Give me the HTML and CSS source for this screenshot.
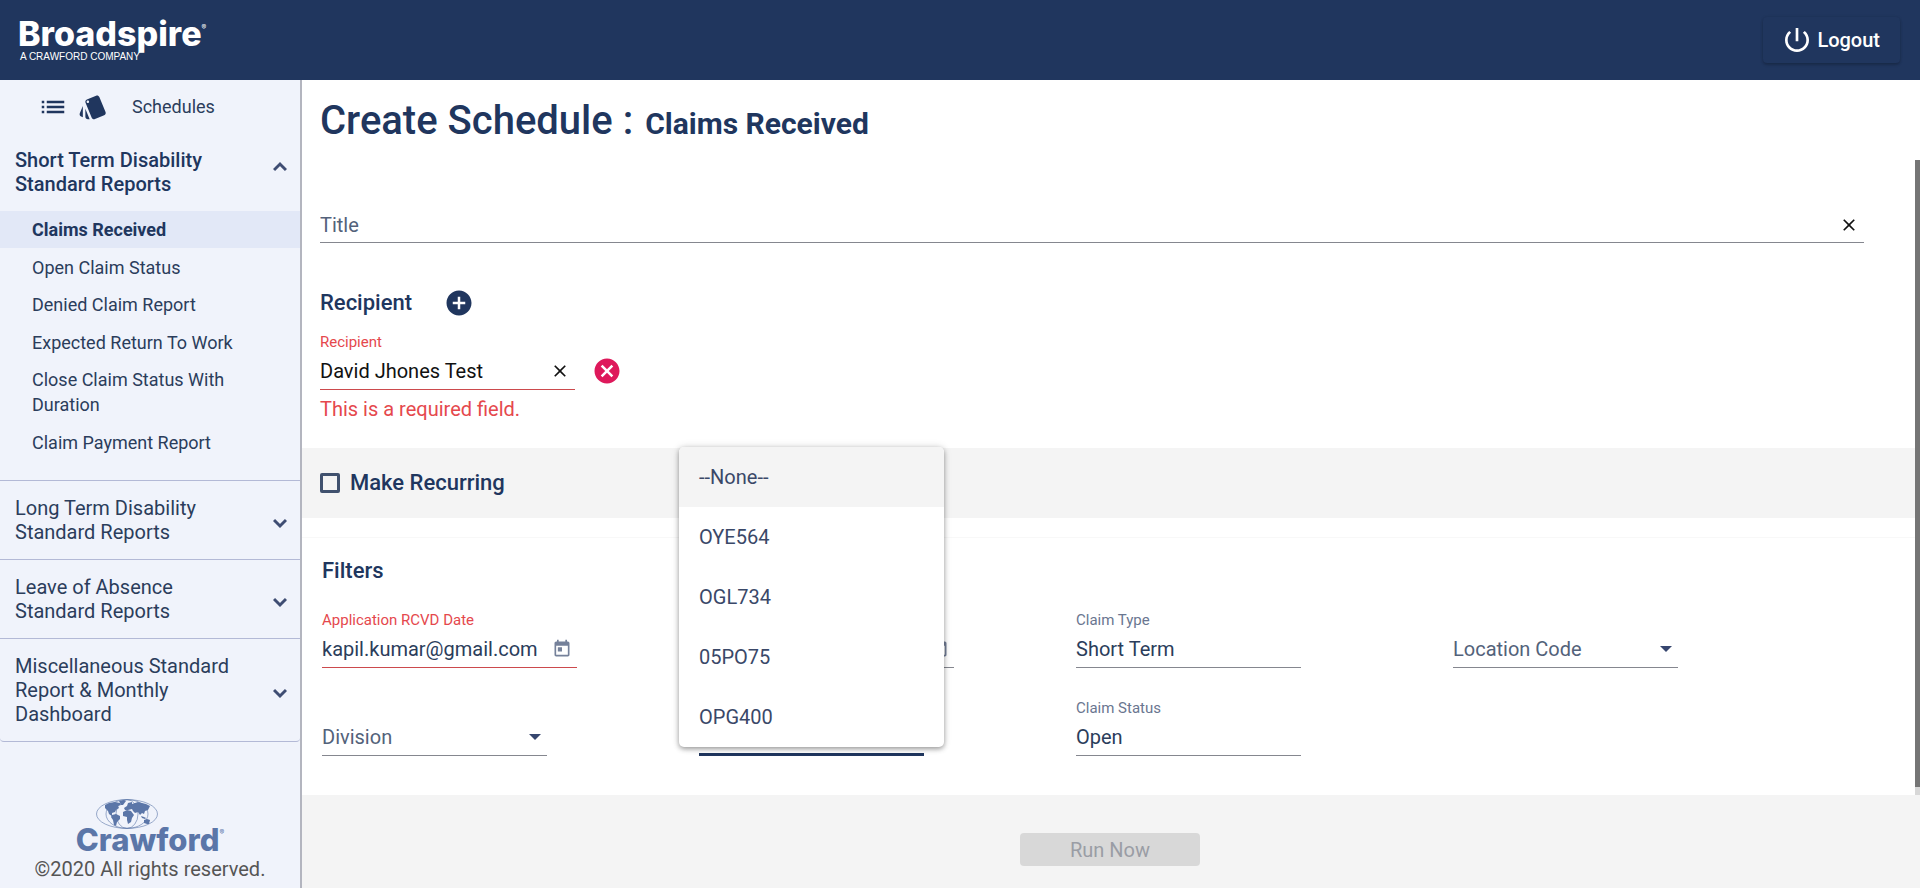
FILE: index.html
```html
<!DOCTYPE html>
<html lang="en">
<head>
<meta charset="utf-8">
<meta name="viewport" content="width=device-width, initial-scale=1">
<title>Create Schedule - Claims Received</title>
<link rel="stylesheet" href="styles.css">
</head>
<body>
<header class="topbar">
  <div class="brand">
    <div class="brand-name">Broadspire<sup class="reg">®</sup></div>
    <div class="brand-sub">A CRAWFORD COMPANY</div>
  </div>
  <button class="logout" type="button">
    <svg class="icon-32" viewBox="0 0 24 24" aria-hidden="true"><path d="M13 3h-2v10h2V3zm4.83 2.17l-1.42 1.42C17.99 7.86 19 9.81 19 12c0 3.87-3.13 7-7 7s-7-3.13-7-7c0-2.19 1.01-4.14 2.58-5.42L6.17 5.17C4.23 6.82 3 9.26 3 12c0 4.97 4.03 9 9 9s9-4.03 9-9c0-2.74-1.23-5.18-3.17-6.83z"/></svg>
    <span>Logout</span>
  </button>
</header>

<div class="shell">
  <aside class="sidebar">
    <div class="side-top">
      <svg class="icon-30" viewBox="0 0 24 24" aria-hidden="true"><path d="M3 13h2v-2H3v2zm0 4h2v-2H3v2zm0-8h2V7H3v2zm4 4h14v-2H7v2zm0 4h14v-2H7v2zM7 7v2h14V7H7z"/></svg>
      <svg class="icon-30" viewBox="0 0 24 24" aria-hidden="true"><path d="M2.53 19.65l1.34.56v-9.03l-2.43 5.86c-.41 1.02.08 2.19 1.09 2.61zm19.5-3.7L17.07 3.98c-.31-.75-1.04-1.21-1.81-1.23-.26 0-.53.04-.79.15L7.1 5.95c-.75.31-1.21 1.03-1.23 1.8-.01.27.04.54.15.8l4.96 11.97c.31.76 1.05 1.22 1.83 1.23.26 0 .52-.05.77-.15l7.36-3.05c1.02-.42 1.51-1.59 1.09-2.6zM7.88 8.75c-.55 0-1-.45-1-1s.45-1 1-1 1 .45 1 1-.45 1-1 1zm-2 11c0 1.1.9 2 2 2h1.45l-3.45-8.34v6.34z"/></svg>
      <span class="side-title">Schedules</span>
    </div>

    <nav class="groups" aria-label="Reports">
      <section class="group">
        <button class="group-head open" type="button" aria-expanded="true">
          <span>Short Term Disability Standard Reports</span>
          <svg class="chevron" viewBox="0 0 14 14" aria-hidden="true"><path d="M1 10l6-6 6 6"/></svg>
        </button>
        <ul class="links">
          <li><a class="link active" href="#">Claims Received</a></li>
          <li><a class="link" href="#">Open Claim Status</a></li>
          <li><a class="link" href="#">Denied Claim Report</a></li>
          <li><a class="link" href="#">Expected Return To Work</a></li>
          <li><a class="link" href="#">Close Claim Status With Duration</a></li>
          <li><a class="link" href="#">Claim Payment Report</a></li>
        </ul>
      </section>
      <section class="group">
        <button class="group-head" type="button" aria-expanded="false">
          <span>Long Term Disability Standard Reports</span>
          <svg class="chevron" viewBox="0 0 14 14" aria-hidden="true"><path d="M1 4l6 6 6-6"/></svg>
        </button>
      </section>
      <section class="group">
        <button class="group-head" type="button" aria-expanded="false">
          <span>Leave of Absence Standard Reports</span>
          <svg class="chevron" viewBox="0 0 14 14" aria-hidden="true"><path d="M1 4l6 6 6-6"/></svg>
        </button>
      </section>
      <section class="group">
        <button class="group-head" type="button" aria-expanded="false">
          <span>Miscellaneous Standard Report &amp; Monthly Dashboard</span>
          <svg class="chevron" viewBox="0 0 14 14" aria-hidden="true"><path d="M1 4l6 6 6-6"/></svg>
        </button>
      </section>
    </nav>

    <div class="side-foot">
      <svg class="globe" viewBox="0 0 62 30" aria-hidden="true">
        <g class="globe-lines">
          <ellipse cx="31" cy="15" rx="30.5" ry="14.4"/>
          <ellipse cx="31" cy="15" rx="21" ry="14.4"/>
          <ellipse cx="31" cy="15" rx="11" ry="14.4"/>
        </g>
        <g class="globe-land">
          <path d="M9 6l4-2 6-1 5 1 1 2-3 1 1 2-3 2-1 2-3 1 0 2 3 2-2 0-4-3-1-3-3-3z"/>
          <path d="M23 2l5-1 2 1-3 4-2 0z"/>
          <path d="M16 16l4-1 4 2 0 3-3 3-1 4-2-1-1-5-2-3z"/>
          <path d="M28 9l3-2 1-3 4-1 0 2 6-2 8 2 4 2-2 4-3 1-1 3-2-1-2 2-2-3-3 1-2-2-1-2-4 1-3 0z"/>
          <path d="M27 13l4-2 4 1 3 4-2 3-1 4-3 2-1-4 0-3-4-1z"/>
          <path d="M45 17l3 1 2 1-1 1-3-1z"/>
          <path d="M48 21l3-1 3 1-1 4-2 0-3-1z"/>
        </g>
      </svg>
      <div class="crawford">Crawford<sup class="reg">®</sup></div>
      <p class="copyright">©2020 All rights reserved.</p>
    </div>
  </aside>

  <main class="main">
    <form class="form" action="#">
      <div class="content">
        <div class="general">
          <h1 class="title">Create Schedule : <span class="title-name">Claims Received</span></h1>
          <div class="field wide">
            <input id="title" type="text" placeholder="Title" aria-label="Title">
            <button class="field-icon" type="button" aria-label="Clear title"><svg class="icon-20" viewBox="0 0 24 24"><path d="M19 6.41L17.59 5 12 10.59 6.41 5 5 6.41 10.59 12 5 17.59 6.41 19 12 13.41 17.59 19 19 17.59 13.41 12z"/></svg></button>
          </div>
          <div class="heading-row">
            <h2 class="heading">Recipient</h2>
            <button class="round" type="button" aria-label="Add recipient"><svg class="icon-30" viewBox="0 0 24 24"><path d="M12 2C6.48 2 2 6.48 2 12s4.48 10 10 10 10-4.48 10-10S17.52 2 12 2zm5 11h-4v4h-2v-4H7v-2h4V7h2v4h4v2z"/></svg></button>
          </div>
          <label class="label error" for="recipient">Recipient</label>
          <div class="recipient-row">
            <div class="field date invalid black">
              <input id="recipient" type="text" value="David Jhones Test" aria-describedby="recipient-error">
              <button class="field-icon" type="button" aria-label="Clear recipient"><svg class="icon-20" viewBox="0 0 24 24"><path d="M19 6.41L17.59 5 12 10.59 6.41 5 5 6.41 10.59 12 5 17.59 6.41 19 12 13.41 17.59 19 19 17.59 13.41 12z"/></svg></button>
            </div>
            <button class="round remove" type="button" aria-label="Remove recipient"><svg class="icon-30" viewBox="0 0 24 24"><path d="M12 2C6.47 2 2 6.47 2 12s4.47 10 10 10 10-4.47 10-10S17.53 2 12 2zm5 13.59L15.59 17 12 13.41 8.41 17 7 15.59 10.59 12 7 8.41 8.41 7 12 10.59 15.59 7 17 8.41 13.41 12 17 15.59z"/></svg></button>
          </div>
          <p class="message error" id="recipient-error">This is a required field.</p>
        </div>

        <div class="recurring">
          <input class="check" id="recurring" type="checkbox">
          <label class="heading" for="recurring">Make Recurring</label>
        </div>

        <section class="filters">
          <h2 class="heading">Filters</h2>
          <div class="filter-grid">
            <div class="cell">
              <label class="label error" for="from">Application RCVD Date</label>
              <div class="field date invalid">
                <input id="from" type="text" value="kapil.kumar@gmail.com">
                <button class="field-icon calendar" type="button" aria-label="Open calendar"><svg class="icon-20" viewBox="0 0 24 24"><path d="M19 3h-1V1h-2v2H8V1H6v2H5c-1.11 0-1.99.9-1.99 2L3 19c0 1.1.89 2 2 2h14c1.1 0 2-.9 2-2V5c0-1.1-.9-2-2-2zm0 16H5V8h14v11zM7 10h5v5H7z"/></svg></button>
              </div>
            </div>
            <div class="cell">
              <div class="field date">
                <input id="to" type="text" aria-label="End date">
                <button class="field-icon calendar" type="button" aria-label="Open calendar"><svg class="icon-20" viewBox="0 0 24 24"><path d="M19 3h-1V1h-2v2H8V1H6v2H5c-1.11 0-1.99.9-1.99 2L3 19c0 1.1.89 2 2 2h14c1.1 0 2-.9 2-2V5c0-1.1-.9-2-2-2zm0 16H5V8h14v11zM7 10h5v5H7z"/></svg></button>
              </div>
            </div>
            <div class="cell">
              <label class="label" for="type">Claim Type</label>
              <div class="field"><input id="type" type="text" value="Short Term"></div>
            </div>
            <div class="cell">
              <div class="field select">
                <select id="location" aria-label="Location Code"><option>Location Code</option></select>
                <svg class="arrow" viewBox="0 0 12 6" aria-hidden="true"><path d="M0 0h12L6 6z"/></svg>
              </div>
            </div>
            <div class="cell">
              <div class="field select">
                <select id="division" aria-label="Division"><option>Division</option></select>
                <svg class="arrow" viewBox="0 0 12 6" aria-hidden="true"><path d="M0 0h12L6 6z"/></svg>
              </div>
            </div>
            <div class="cell">
              <div class="field focused"></div>
              <div class="menu" role="listbox" aria-label="Code">
                <button class="option selected" type="button" role="option" aria-selected="true">--None--</button>
                <button class="option" type="button" role="option">OYE564</button>
                <button class="option" type="button" role="option">OGL734</button>
                <button class="option" type="button" role="option">05PO75</button>
                <button class="option" type="button" role="option">OPG400</button>
              </div>
            </div>
            <div class="cell">
              <label class="label" for="status">Claim Status</label>
              <div class="field"><input id="status" type="text" value="Open"></div>
            </div>
          </div>
        </section>
        <div class="scroll-track" aria-hidden="true"><div class="scroll-thumb"></div></div>
      </div>
      <footer class="actions">
        <button class="run" type="submit" disabled>Run Now</button>
      </footer>
    </form>
  </main>
</div>
</body>
</html>
```
FILE: styles.css
```css
:root {
  --navy: #20365e;
  --ink: #2b3d5b;
  --muted: #53627a;
  --red: #e5484d;
  --panel: #f0f3fb;
  --grey: #f4f4f4;
}

* { box-sizing: border-box; }

body {
  margin: 0;
  min-height: 100vh;
  display: flex;
  flex-direction: column;
  font-family: Roboto, "Liberation Sans", sans-serif;
  font-size: 20px;
  line-height: 24px;
  color: var(--ink);
  background: #fff;
}

h1, h2, p, ul { margin: 0; padding: 0; }
ul { list-style: none; }
svg { display: block; fill: currentColor; }

button, input, select {
  font: inherit;
  color: inherit;
  border: 0;
  border-radius: 0;
  padding: 0;
  background: none;
  outline: 0;
}

.icon-20 { width: 20px; height: 20px; }
.icon-30 { width: 30px; height: 30px; }
.icon-32 { width: 32px; height: 32px; }

/* Top bar */
.topbar {
  display: flex;
  align-items: center;
  justify-content: space-between;
  height: 80px;
  padding: 0 20px 0 18px;
  color: #fff;
  background: var(--navy);
}

.brand-name {
  font-family: Inter, Roboto, sans-serif;
  font-size: 34px;
  font-weight: 800;
  line-height: 34px;
}

.brand-sub {
  margin-left: 2px;
  font-family: "Liberation Sans", Arial, sans-serif;
  font-size: 10px;
  line-height: 12px;
}

.reg {
  font-size: 7px;
  font-weight: 400;
  line-height: 0;
  vertical-align: 16px;
}

.logout {
  display: flex;
  align-items: center;
  gap: 4px;
  height: 46px;
  padding: 0 20px 0 18px;
  border-radius: 4px;
  font-weight: 500;
  box-shadow: 0 2px 3px rgba(0, 0, 0, 0.2), 0 0 3px rgba(0, 0, 0, 0.1);
}

/* Layout */
.shell { flex: 1; display: flex; }

/* Sidebar */
.sidebar {
  flex: 0 0 302px;
  display: flex;
  flex-direction: column;
  background: var(--panel);
  border-right: 2px solid #b3b5bf;
}

.side-top {
  display: flex;
  align-items: center;
  gap: 10px;
  height: 54px;
  padding-left: 38px;
  color: var(--navy);
}

.side-title {
  margin-left: 14px;
  font-size: 18px;
  color: var(--ink);
}

.group { border-bottom: 1px solid #b3b9d6; }
.group:last-child { border-radius: 0 0 4px 4px; }

.group-head {
  display: flex;
  align-items: center;
  justify-content: space-between;
  width: 100%;
  padding: 15px 13px 15px 15px;
  text-align: left;
}

.group-head span { max-width: 230px; }

.group-head.open {
  padding-top: 14px;
  font-weight: 500;
  color: var(--navy);
}

.chevron {
  width: 14px;
  height: 14px;
  margin-top: 6px;
  fill: none;
  stroke: #3f4d73;
  stroke-width: 3;
}

.open .chevron { margin: 0 0 10px; }

.links {
  display: flex;
  flex-direction: column;
  justify-content: space-between;
  min-height: 269px;
  padding-bottom: 19px;
}

.link {
  display: block;
  padding: 6px 40px 6px 32px;
  font-size: 18px;
  line-height: 25px;
  color: var(--ink);
  text-decoration: none;
}

.link.active {
  font-weight: 700;
  color: var(--navy);
  background: #e2e8f7;
}

.side-foot {
  display: flex;
  flex-direction: column;
  align-items: center;
  margin-top: auto;
  padding: 0 0 8px;
  color: #5b76a8;
}

.globe { width: 62px; height: 30px; margin-right: 46px; }
.globe-lines { fill: none; stroke: currentColor; stroke-width: 0.6; }

.crawford {
  font-family: Inter, Roboto, sans-serif;
  font-size: 31px;
  font-weight: 800;
  line-height: 22px;
}

.copyright { margin-top: 6px; color: #555; }

/* Main */
.main { flex: 1; display: flex; min-width: 0; }
.form { flex: 1; display: flex; flex-direction: column; min-width: 0; }
.content { position: relative; flex: 1; }
.general { padding: 0 56px 27px 18px; }

.title {
  margin-bottom: 42px;
  font-size: 40px;
  font-weight: 500;
  line-height: 82px;
  color: var(--navy);
}

.title-name {
  margin-left: 2px;
  font-size: 30px;
  font-weight: 700;
}

.heading {
  font-size: 22px;
  font-weight: 500;
  line-height: 32px;
  color: var(--navy);
}

.heading-row {
  display: flex;
  align-items: center;
  gap: 32px;
  margin: 44px 0 13px;
}

.round { color: var(--navy); }
.remove { color: #de195b; }

.label {
  display: block;
  font-size: 15px;
  line-height: 20px;
  color: #6a7690;
}

.error { color: var(--red); }

.field {
  display: flex;
  align-items: center;
  width: 225px;
  height: 38px;
  border-bottom: 1px solid #85878f;
}

.field input, .field select {
  flex: 1;
  width: 100%;
  min-width: 0;
  height: 36px;
  appearance: none;
  text-overflow: clip;
}

.field input::placeholder { color: var(--muted); opacity: 1; }
.field.wide { width: 100%; height: 36px; }
.field.date { width: 255px; }
.field.invalid { border-color: #cc4a4d; }
.field.black { color: #111; }
.field.select { color: var(--muted); }
.field.focused { height: 39px; border-bottom: 3px solid var(--navy); }
.field-icon { padding: 0 5px; color: #111; }
.calendar { color: #75819a; }

.arrow {
  width: 12px;
  height: 6px;
  margin-right: 6px;
  fill: #36466f;
  pointer-events: none;
}

.recipient-row {
  display: flex;
  align-items: center;
  gap: 17px;
}

.message { margin-top: 7px; }

.recurring {
  display: flex;
  align-items: center;
  gap: 10px;
  height: 70px;
  padding-left: 18px;
  background: var(--grey);
}

.check {
  width: 20px;
  height: 20px;
  margin: 0;
  appearance: none;
  border: 3px solid #40516e;
  border-radius: 2px;
}

.filters {
  margin-top: 19px;
  padding: 17px 90px 39px 20px;
  border-top: 1px solid #f8f8f8;
}

.filter-grid {
  display: grid;
  grid-template-columns: repeat(4, 1fr);
  gap: 30px 0;
  margin-top: 23px;
}

.cell {
  position: relative;
  display: flex;
  flex-direction: column;
  justify-content: flex-end;
  height: 58px;
}

/* Open drop-down over the filter grid */
.menu {
  position: absolute;
  left: -20px;
  bottom: 9px;
  z-index: 2;
  width: 265px;
  overflow: hidden;
  border-radius: 5px;
  background: #fff;
  box-shadow: 0 2px 5px rgba(0, 0, 0, 0.35), 0 0 8px rgba(0, 0, 0, 0.12);
}

.option {
  display: block;
  width: 100%;
  height: 60px;
  padding-left: 20px;
  text-align: left;
  color: #3a4868;
}

.option.selected { background: var(--grey); }

.scroll-track {
  position: absolute;
  top: 80px;
  right: 0;
  bottom: 0;
  width: 5px;
  background: #d8d8d8;
}

.scroll-thumb { height: calc(100% - 8px); background: #757575; }

.actions {
  display: flex;
  justify-content: center;
  padding: 38px 2px 23px 0;
  background: var(--grey);
}

.run {
  width: 180px;
  height: 33px;
  border-radius: 4px;
  color: #9a9da5;
  background: #d8d8d8;
}
```
